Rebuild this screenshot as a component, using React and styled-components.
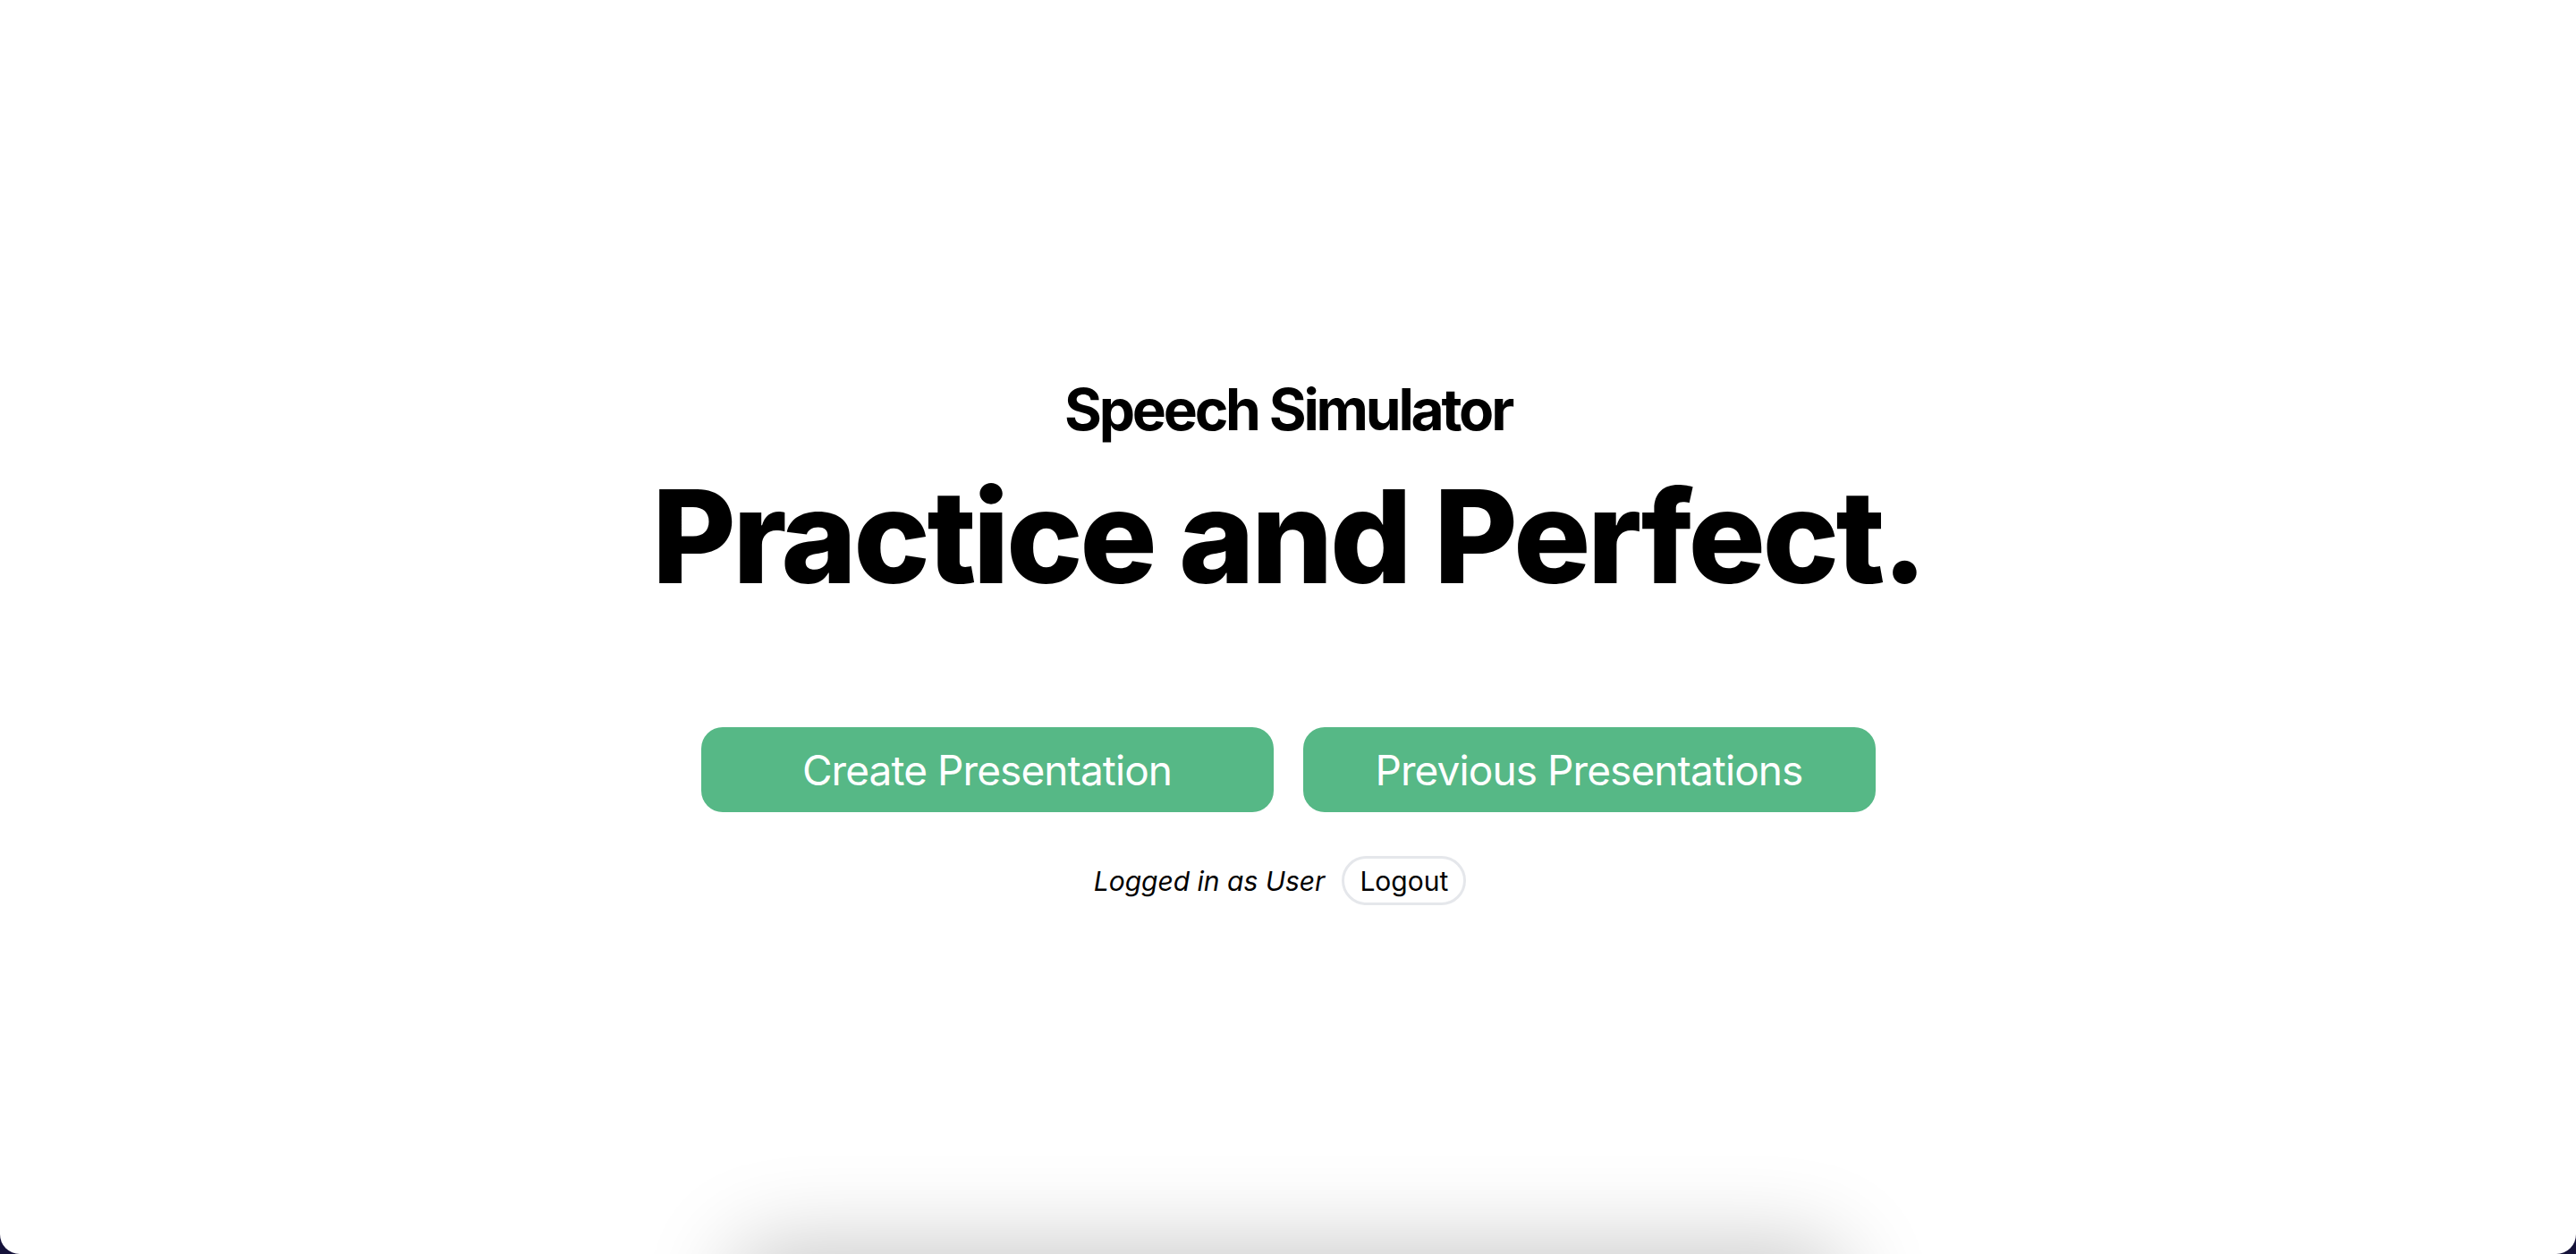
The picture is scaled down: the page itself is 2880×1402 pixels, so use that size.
import React from "react";
import styled, { createGlobalStyle } from "styled-components";

const Global = createGlobalStyle`
  html, body { margin: 0; padding: 0; background: #15123a; }
  body { font-family: Inter, "Noto Sans", sans-serif; -webkit-font-smoothing: antialiased; }
  * { box-sizing: border-box; }
`;

const Window = styled.div`
  width: 2880px;
  height: 1402px;
  background: #ffffff;
  border-radius: 0 0 22px 22px;
  overflow: hidden;
`;

const Hero = styled.section`
  height: 1402px;
  display: flex;
  flex-direction: column;
  align-items: center;
  justify-content: center;
  padding-top: 30px;
`;

const Eyebrow = styled.h2`
  margin: 0;
  font-size: 64px;
  line-height: 76px;
  font-weight: 700;
  letter-spacing: -0.05em;
  color: #000;
`;

const Title = styled.h1`
  margin: 32px 0 0;
  font-size: 144px;
  line-height: 1;
  font-weight: 800;
  letter-spacing: -0.025em;
  color: #000;
`;

const Actions = styled.div`
  display: flex;
  gap: 33px;
  margin-top: 141px;
`;

const PrimaryButton = styled.button`
  width: 640px;
  height: 95px;
  border: none;
  border-radius: 24px;
  background: #56b886;
  color: #fff;
  font-family: Inter, sans-serif;
  font-size: 46px;
  font-weight: 400;
  letter-spacing: -0.02em;
  cursor: pointer;
`;

const Session = styled.div`
  display: flex;
  align-items: center;
  gap: 19px;
  margin-top: 49px;
  padding-right: 18px;
`;

const SessionText = styled.span`
  font-size: 30px;
  font-style: italic;
  color: #000;
`;

const GhostButton = styled.button`
  height: 55px;
  padding: 0 17px;
  border: 3px solid #e5e7eb;
  border-radius: 28px;
  background: #fff;
  color: #000;
  font-family: Inter, sans-serif;
  font-size: 30px;
`;

const Below = styled.div`
  display: flex;
  justify-content: center;
`;

const Card = styled.div`
  width: 1240px;
  height: 600px;
  border-radius: 40px;
  background: #fff;
  box-shadow: 0 -10px 100px 0 rgba(0, 0, 0, 0.22);
`;

export default function App() {
  return (
    <Window>
      <Global />
      <Hero>
        <Eyebrow>Speech Simulator</Eyebrow>
        <Title>Practice and Perfect.</Title>
        <Actions>
          <PrimaryButton>Create Presentation</PrimaryButton>
          <PrimaryButton>Previous Presentations</PrimaryButton>
        </Actions>
        <Session>
          <SessionText>Logged in as User</SessionText>
          <GhostButton>Logout</GhostButton>
        </Session>
      </Hero>
      <Below>
        <Card />
      </Below>
    </Window>
  );
}
